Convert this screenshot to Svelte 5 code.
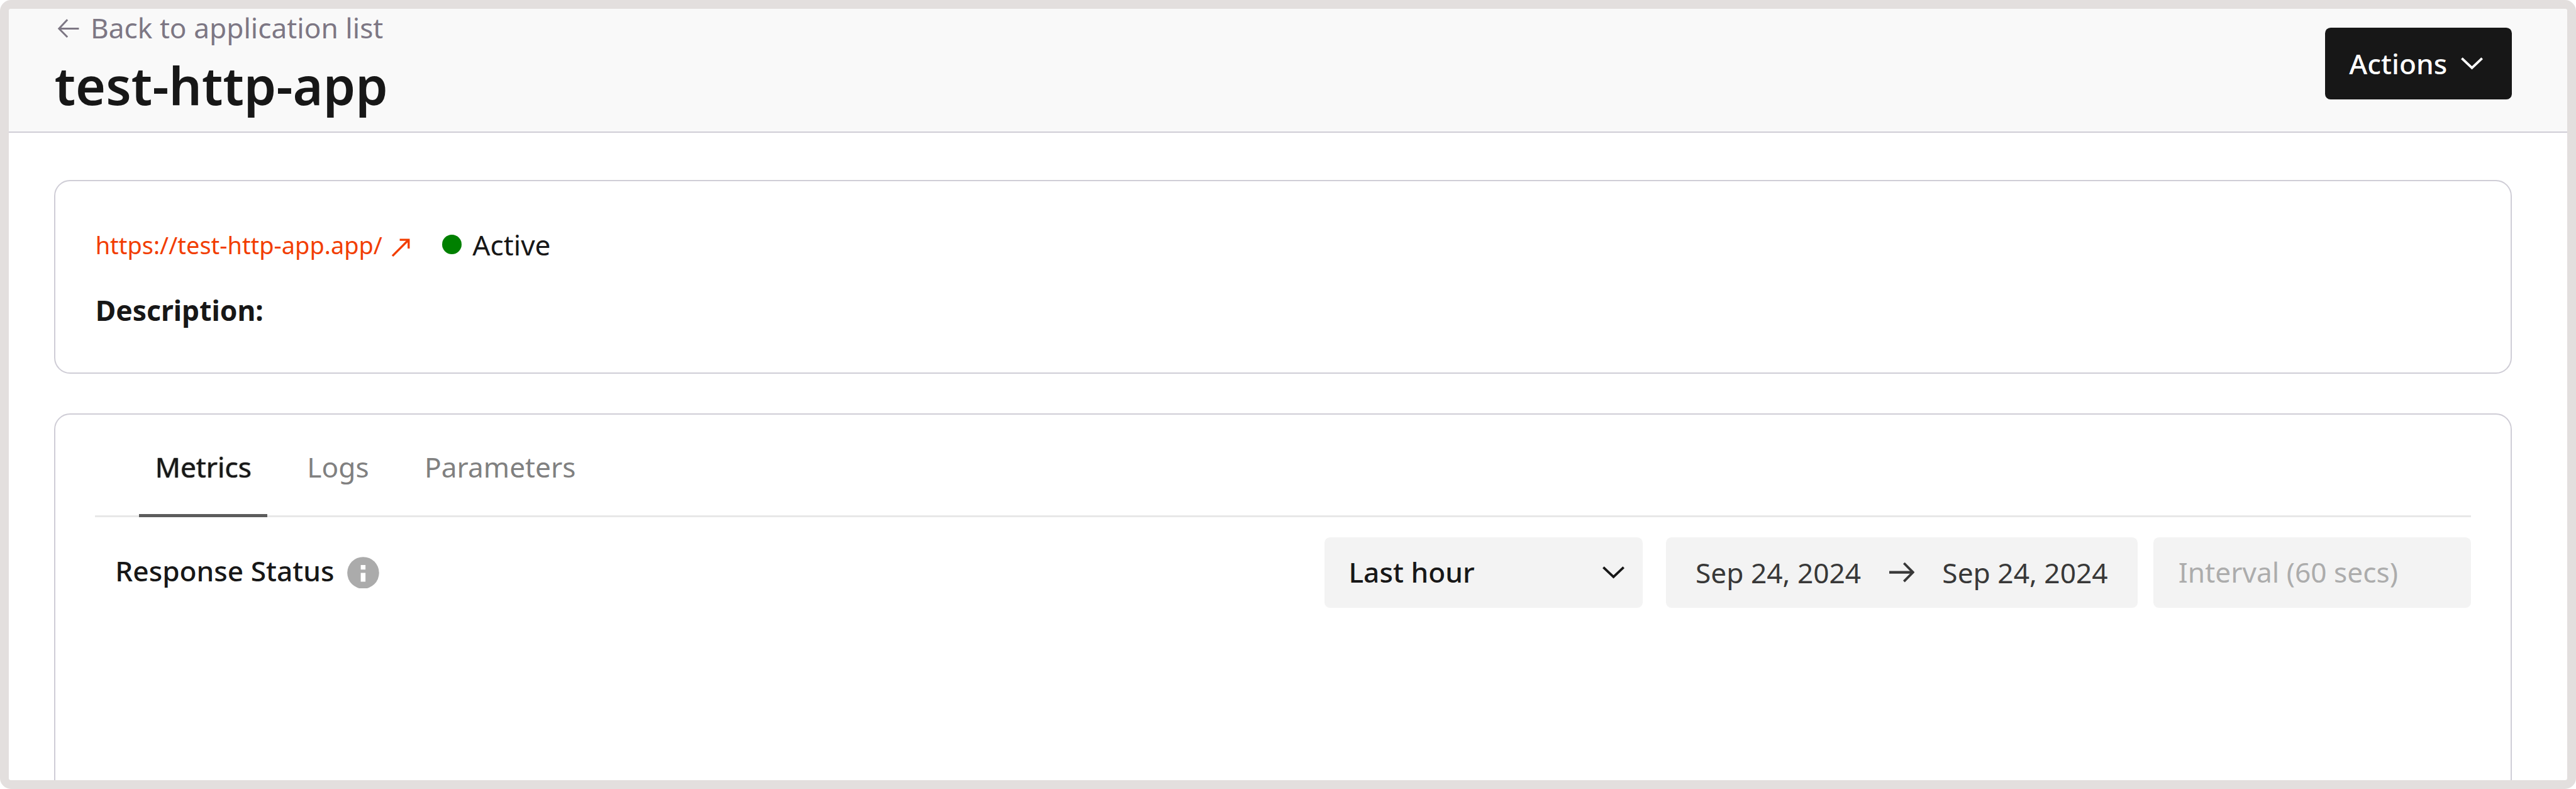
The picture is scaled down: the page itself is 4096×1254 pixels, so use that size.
<script>
  const tabs = ['Metrics', 'Logs', 'Parameters'];
  let active = $state('Metrics');
</script>

{#snippet chevron()}
  <svg class="chevron" viewBox="0 0 40 22" fill="none" stroke="currentColor" stroke-width="4.4">
    <path d="M1.6 1.8 20 19.2 38.4 1.8" />
  </svg>
{/snippet}

<div class="frame">
  <header>
    <div class="heading">
      <a class="back" href="#list">
        <svg class="back-icon" viewBox="0 0 48 56" fill="none" stroke="currentColor" stroke-width="3.4">
          <path d="M43.8 29H8M23 12.9 7.8 29 23 44.4" />
        </svg>
        <span>Back to application list</span>
      </a>
      <h1>test-http-app</h1>
    </div>
    <button class="actions">
      <span>Actions</span>
      {@render chevron()}
    </button>
  </header>

  <main>
    <section class="card info">
      <div class="summary">
        <a class="url" href="#app">https://test-http-app.app/</a>
        <svg class="external" viewBox="0 0 44 60" fill="none" stroke="currentColor" stroke-width="3.8">
          <path d="M6.8 50 36 20.8" />
          <path d="M20 20.6H36.2V36.4" />
        </svg>
        <span class="dot"></span>
        <span class="status">Active</span>
      </div>
      <div class="description">Description:</div>
    </section>

    <section class="card details">
      <nav>
        {#each tabs as tab}
          <button class="tab" class:active={tab === active} onclick={() => (active = tab)}>{tab}</button>
        {/each}
      </nav>
      <div class="toolbar">
        <div class="metric">
          <span>Response Status</span>
          <svg class="help" viewBox="0 0 58 58">
            <circle cx="29" cy="29" r="28.8" fill="#ababab" />
            <path d="M24.6 14.8h8.6v8.2h-8.6zM24.6 29h8.6v16h-8.6z" fill="#fff" />
          </svg>
        </div>
        <div class="field select">
          <span>Last hour</span>
          {@render chevron()}
        </div>
        <div class="field range">
          <span>Sep 24, 2024</span>
          <svg class="to" viewBox="0 0 46 40" fill="none" stroke="currentColor">
            <path stroke-width="4.8" d="M0 20h43" />
            <path stroke-width="4.4" d="M26.6 3.4 43 20 26.6 36.6" />
          </svg>
          <span>Sep 24, 2024</span>
        </div>
        <div class="field interval">Interval (60 secs)</div>
      </div>
    </section>
  </main>
</div>

<style>
  /* 1rem stands for 100 design units */
  :global(html) {
    font-size: 87.822px;
  }
  :global(body) {
    margin: 0;
    background: #fff;
    overflow: hidden;
  }
  .frame {
    box-sizing: border-box;
    width: 100vw;
    height: 100vh;
    border: 0.16rem solid #e3dfde;
    border-radius: 0.2rem;
    overflow: hidden;
    display: flex;
    flex-direction: column;
    background: #fff;
    color: #171717;
    font-family: 'Noto Sans', sans-serif;
    font-size: 0.504rem;
    line-height: 0.6rem;
    white-space: nowrap;
  }
  svg {
    display: block;
    flex: none;
  }
  a {
    text-decoration: none;
  }
  button {
    font: inherit;
    border: 0;
    padding: 0;
    background: none;
  }

  header {
    box-sizing: border-box;
    flex: none;
    height: 2.24rem;
    padding: 0 1rem 0 0.828rem;
    border-bottom: 2px solid #cfcdd6;
    background: #f9f9f9;
    display: flex;
    justify-content: space-between;
    align-items: flex-start;
  }
  .heading {
    padding-top: 0.064rem;
  }
  .back {
    display: flex;
    align-items: center;
    gap: 0.172rem;
    height: 0.56rem;
    color: #7d7784;
  }
  .back-icon {
    width: 0.48rem;
    height: 0.56rem;
  }
  h1 {
    margin: 0.162rem 0 0;
    font-size: 0.937rem;
    line-height: 1.2rem;
    font-weight: 600;
  }
  .actions {
    box-sizing: border-box;
    width: 3.38rem;
    height: 1.3rem;
    margin-top: 0.34rem;
    padding-left: 0.432rem;
    border-radius: 0.1rem;
    background: #171717;
    color: #fff;
    font-weight: 500;
    display: flex;
    align-items: center;
    gap: 0.25rem;
  }
  .chevron {
    width: 0.4rem;
    height: 0.22rem;
  }

  main {
    flex: 1;
    min-height: 0;
    padding: 0.86rem 1rem 0 0.82rem;
    display: flex;
    flex-direction: column;
    gap: 0.72rem;
  }
  .card {
    box-sizing: border-box;
    flex: none;
    border: 2px solid #cfcdd6;
    border-radius: 0.29rem;
  }
  .info {
    height: 3.5rem;
    padding: 0.798rem 0.725rem 0;
  }
  .summary {
    display: flex;
    align-items: center;
    height: 0.7rem;
  }
  .url {
    color: #f23d00;
    font-size: 0.432rem;
  }
  .external {
    width: 0.44rem;
    height: 0.6rem;
    margin: 0 0.52rem 0 0.117rem;
    color: #f23d00;
  }
  .dot {
    width: 0.36rem;
    height: 0.36rem;
    margin: 0 0.195rem 0.016rem 0;
    border-radius: 50%;
    background: #008000;
  }
  .description {
    margin-top: 0.536rem;
    font-size: 0.506rem;
    font-weight: 700;
  }

  .details {
    height: 8rem;
    padding: 0 0.72rem;
  }
  nav {
    box-sizing: border-box;
    height: 1.86rem;
    padding-left: 0.8rem;
    border-bottom: 0.04rem solid #e8e8e8;
    display: flex;
    gap: 0.43rem;
  }
  .tab {
    box-sizing: border-box;
    height: 1.86rem;
    padding: 0.654rem 0.288rem 0;
    border-bottom: 0.06rem solid transparent;
    color: #808080;
    display: flex;
    align-items: flex-start;
  }
  .tab.active {
    border-bottom-color: #5c5c5c;
    color: #171717;
    text-shadow: 0 0 0.016rem currentColor;
  }

  .toolbar {
    margin-top: 0.36rem;
    height: 1.28rem;
    display: flex;
    align-items: stretch;
  }
  .metric {
    flex: 1;
    padding-left: 0.365rem;
    display: flex;
    align-items: center;
    gap: 0.228rem;
    font-weight: 500;
  }
  .metric span {
    padding-bottom: 0.05rem;
  }
  .help {
    width: 0.58rem;
    height: 0.58rem;
  }
  .field {
    box-sizing: border-box;
    border-radius: 0.1rem;
    background: #f3f3f3;
    display: flex;
    align-items: center;
  }
  .select {
    width: 5.755rem;
    margin-right: 0.422rem;
    padding: 0 0.322rem 0 0.437rem;
    justify-content: space-between;
    font-weight: 500;
  }
  .select span {
    padding-bottom: 0.026rem;
  }
  .range {
    width: 8.54rem;
    margin-right: 0.285rem;
    padding: 0 0.535rem 0 0.54rem;
    justify-content: space-between;
    color: #383838;
  }
  .to {
    width: 0.46rem;
    height: 0.4rem;
  }
  .interval {
    width: 5.755rem;
    padding: 0 0 0.026rem 0.459rem;
    color: #acacac;
  }
</style>
